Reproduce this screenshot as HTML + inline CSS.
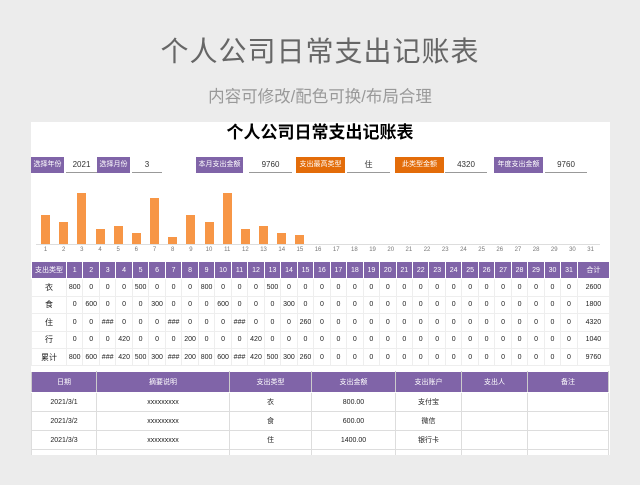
<!DOCTYPE html>
<html><head><meta charset="utf-8"><style>
*{margin:0;padding:0;box-sizing:border-box}
body{width:640px;height:485px;background:#ececec;position:relative;overflow:hidden;font-family:"Liberation Sans","Noto Sans CJK SC",sans-serif}
.a{position:absolute}
.t1{left:0;width:640px;top:34px;text-align:center;font-size:28px;color:#666;line-height:36px;letter-spacing:1px}
.t2{left:0;width:640px;top:86px;text-align:center;font-size:16.5px;color:#999;line-height:22px}
.card{left:31px;top:122px;width:579px;height:333px;background:#fff}
.ct{left:0;width:640px;top:122px;text-align:center;font-size:17px;font-weight:bold;color:#000;line-height:22px}
.lb{height:16px;line-height:16px;font-size:7px;color:#fff;text-align:center;top:157px;white-space:nowrap;overflow:hidden}
.p{background:#8064a8}.o{background:#e36c09}
.v{height:16px;line-height:15px;font-size:8px;color:#333;text-align:center;top:157px;border-bottom:1px solid #999}
.bar{background:#f79646;width:9px}
.xl{font-size:6px;color:#777;top:247px;width:18px;text-align:center}
table{border-collapse:collapse;position:absolute}
.s td{height:17.4px;font-size:7px;text-align:center;color:#222;border:1px solid #eee;padding:0;width:16.5px}
.s tr:first-child td{background:#8064a8;color:#fff;border:1px solid #fff;font-size:7px}
.s td:first-child{width:35px;font-size:8px}
.s td:last-child{width:32px}
.d td{height:19px;font-size:7px;text-align:center;color:#222;border:1px solid #ddd;padding:0}
.d tr:first-child td{background:#8064a8;color:#fff;height:21px;border-color:#fff #ccc}
</style></head><body>
<div class="a t1">个人公司日常支出记账表</div>
<div class="a t2">内容可修改/配色可换/布局合理</div>
<div class="a card"></div>
<div class="a ct">个人公司日常支出记账表</div>

<div class="a lb p" style="left:31px;width:33px">选择年份</div>
<div class="a v" style="left:66px;width:31px">2021</div>
<div class="a lb p" style="left:97px;width:33px">选择月份</div>
<div class="a v" style="left:132px;width:30px">3</div>
<div class="a lb p" style="left:196px;width:47px">本月支出金额</div>
<div class="a v" style="left:249px;width:43px">9760</div>
<div class="a lb o" style="left:296px;width:49px">支出最高类型</div>
<div class="a v" style="left:347px;width:43px">住</div>
<div class="a lb o" style="left:395px;width:49px">此类型金额</div>
<div class="a v" style="left:445px;width:42px">4320</div>
<div class="a lb p" style="left:494px;width:49px">年度支出金额</div>
<div class="a v" style="left:545px;width:42px">9760</div>

<div class="a" style="left:36px;top:244px;width:564px;height:1px;background:#ddd"></div>
<div id="bars"></div>
<script>
var h=[29,22,51,15,18,11,46,7,29,22,51,15,18,11,9];var s='';
for(var i=0;i<31;i++){var cx=45.5+i*18.17;
if(i<15)s+='<div class="a bar" style="left:'+(cx-4.5)+'px;top:'+(244-h[i])+'px;height:'+h[i]+'px"></div>';
s+='<div class="a xl" style="left:'+(cx-9)+'px">'+(i+1)+'</div>';}
document.getElementById('bars').innerHTML=s;
</script>

<table class="s" style="left:31px;top:261px;width:579px">
<tbody id="sb"></tbody></table>
<script>
var rows=[['支出类型'],['衣',800,0,0,0,500,0,0,0,800,0,0,0,500,0,0,0],['食',0,600,0,0,0,300,0,0,0,600,0,0,0,300,0,0],['住',0,0,'###',0,0,0,'###',0,0,0,'###',0,0,0,260,0],['行',0,0,0,420,0,0,0,200,0,0,0,420,0,0,0,0],['累计',800,600,'###',420,500,300,'###',200,800,600,'###',420,500,300,260,0]];
var tot=['合计',2600,1800,4320,1040,9760];var o='';
for(var r=0;r<6;r++){o+='<tr><td>'+rows[r][0]+'</td>';
for(var d=1;d<=31;d++){o+='<td>'+(r==0?d:(d<=16?rows[r][d]:0))+'</td>';}
o+='<td>'+tot[r]+'</td></tr>';}
document.getElementById('sb').innerHTML=o;
</script>

<table class="d" style="left:31px;top:371px;width:578px">
<tr><td style="width:65px">日期</td><td style="width:133px">摘要说明</td><td style="width:82px">支出类型</td><td style="width:84px">支出金额</td><td style="width:66px">支出账户</td><td style="width:66px">支出人</td><td>备注</td></tr>
<tr><td>2021/3/1</td><td>xxxxxxxxx</td><td>衣</td><td>800.00</td><td>支付宝</td><td></td><td></td></tr>
<tr><td>2021/3/2</td><td>xxxxxxxxx</td><td>食</td><td>600.00</td><td>微信</td><td></td><td></td></tr>
<tr><td>2021/3/3</td><td>xxxxxxxxx</td><td>住</td><td>1400.00</td><td>银行卡</td><td></td><td></td></tr>
<tr><td style="height:8px"></td><td></td><td></td><td></td><td></td><td></td><td></td></tr>
</table>
<div class="a" style="left:0;top:455px;width:640px;height:30px;background:#ececec"></div>
</body></html>
